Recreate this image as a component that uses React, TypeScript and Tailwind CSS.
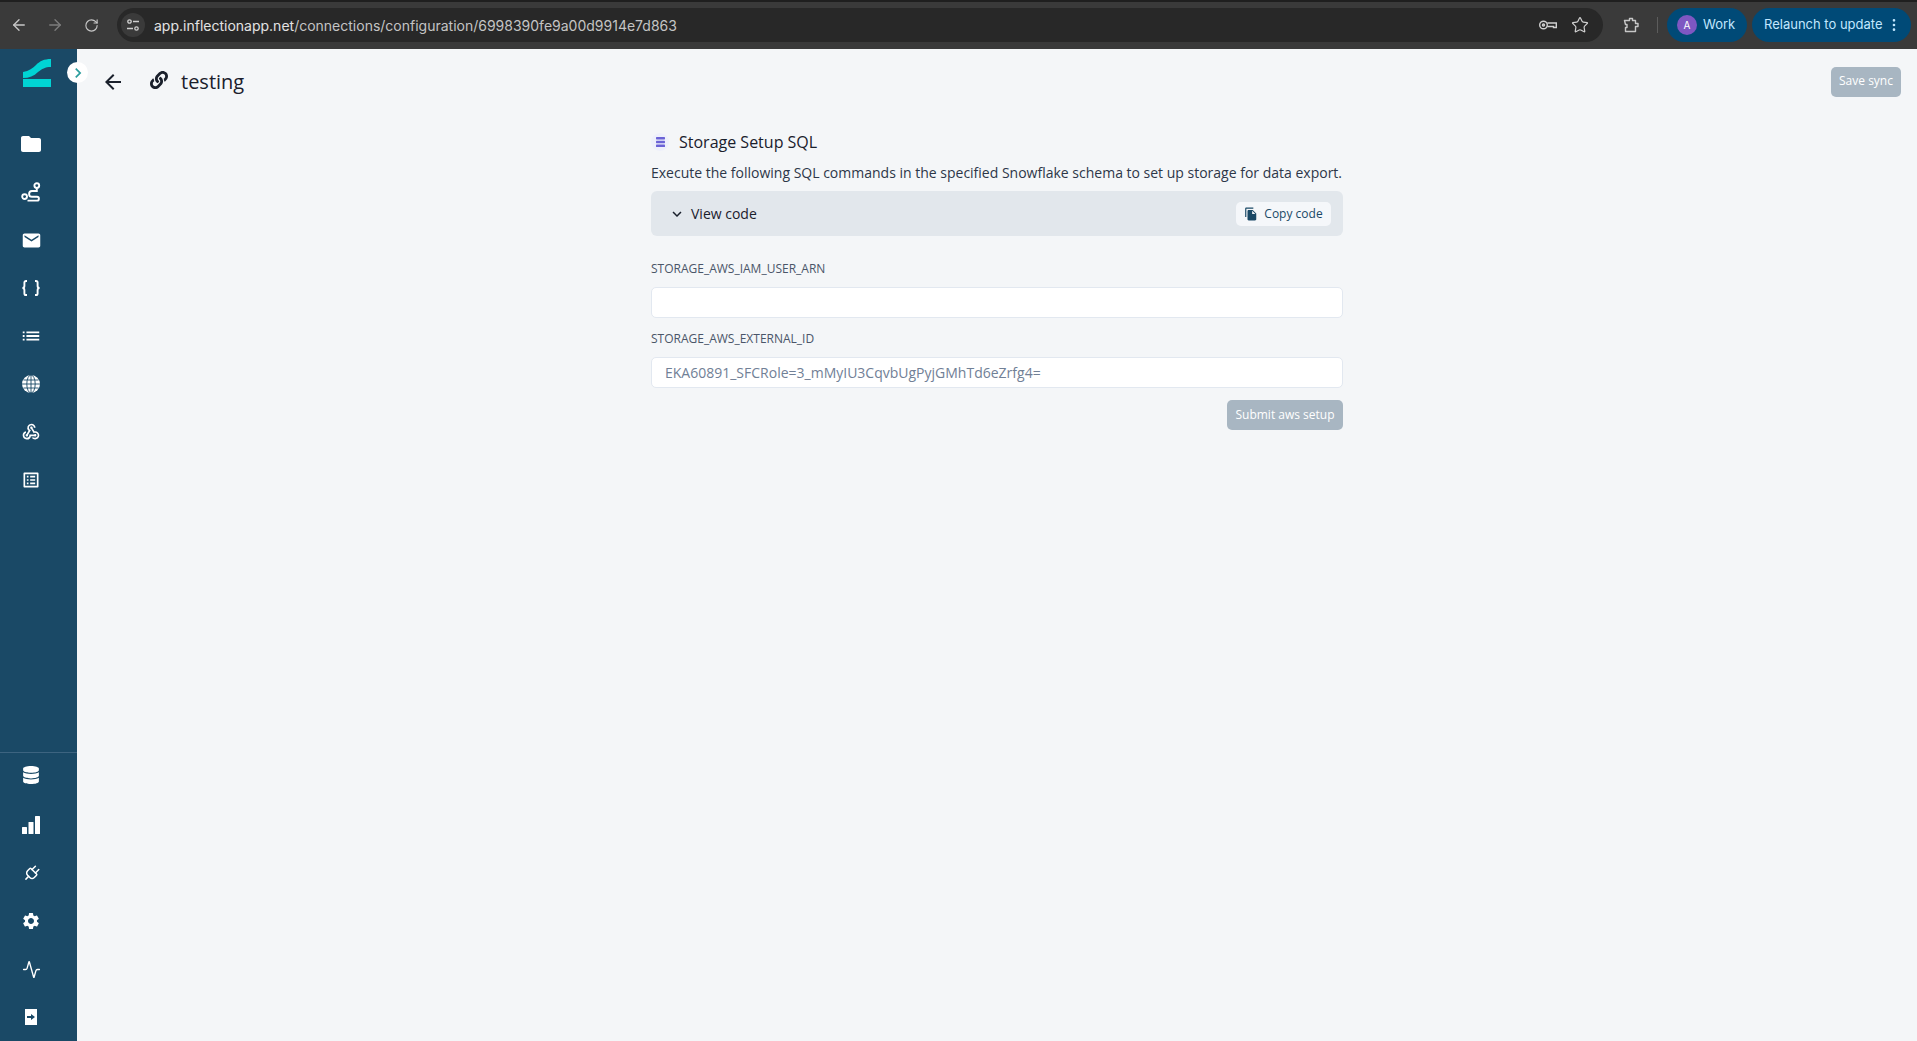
import React from "react";
import { MdFolder, MdEmail, MdWebhook, MdOutlineListAlt, MdArrowBack, MdKeyboardArrowDown, MdChevronRight, MdFileCopy, MdSettings, MdList } from "react-icons/md";
import { FaDatabase, FaLink } from "react-icons/fa";
import { Activity, Plug, ArrowLeft, ArrowRight, RotateCw, Star, MoreVertical } from "lucide-react";

const font = "font-['Open_Sans','Noto_Sans',sans-serif]";

function SideIcon({ children }: { children: React.ReactNode }) {
  return <div className="flex h-12 items-center justify-center text-white">{children}</div>;
}

function Logo() {
  return (
    <svg width="28" height="28" viewBox="0 0 28 28" className="block">
      <path d="M0 13 C6 12 10 9 13 6 C17 2 21 0 28 0 V8 C22 8 19 10 15 13 C11 17 6 19 0 19Z" fill="#00d4d4" />
      <rect x="0" y="20" width="28" height="8" fill="#00d4d4" />
    </svg>
  );
}

function ExitIcon() {
  return (
    <svg width="12" height="16" viewBox="0 0 12 16">
      <rect width="12" height="16" fill="#fff" />
      <path d="M2 7h4V5l4 3-4 3V9H2z" fill="#1a4966" />
    </svg>
  );
}

function RouteIcon() {
  return (
    <svg width="20" height="20" viewBox="0 0 20 20" fill="none" stroke="#fff" strokeWidth="1.9">
      <circle cx="15.8" cy="3.6" r="2.4" />
      <circle cx="3.6" cy="14.6" r="2.4" />
      <path d="M15.8 6.5 V9 H11 a2.9 2.9 0 0 0 0 5.8 H16 a1.9 1.9 0 0 1 0 3.8 H6.5" />
    </svg>
  );
}

function BracesIcon() {
  return (
    <svg width="20" height="16" viewBox="0 0 20 16" fill="none" stroke="#fff" strokeWidth="1.9">
      <path d="M6 1 H5 a1.6 1.6 0 0 0 -1.6 1.6 V6 a2 2 0 0 1 -2 2 a2 2 0 0 1 2 2 V13.4 a1.6 1.6 0 0 0 1.6 1.6 H6" />
      <path d="M14 1 H15 a1.6 1.6 0 0 1 1.6 1.6 V6 a2 2 0 0 0 2 2 a2 2 0 0 0 -2 2 V13.4 a1.6 1.6 0 0 1 -1.6 1.6 H14" />
    </svg>
  );
}

function GlobeIcon() {
  return (
    <svg width="18" height="18" viewBox="0 0 18 18" fill="none">
      <circle cx="9" cy="9" r="9" fill="#fff" />
      <g stroke="#1a4966" strokeWidth="0.9">
        <path d="M9 0V18M0 9H18M1.5 5H16.5M1.5 13H16.5" />
        <ellipse cx="9" cy="9" rx="4.2" ry="9" />
      </g>
    </svg>
  );
}

function BarsIcon() {
  return (
    <svg width="18" height="18" viewBox="0 0 18 18" fill="#fff">
      <rect x="0" y="11" width="5" height="7" rx="0.5" />
      <rect x="6.5" y="6" width="5" height="12" rx="0.5" />
      <rect x="13" y="0" width="5" height="18" rx="0.5" />
    </svg>
  );
}

function KeyIcon() {
  return (
    <svg width="18" height="12" viewBox="0 0 18 12" fill="none" stroke="currentColor" strokeWidth="1.4">
      <circle cx="4.5" cy="6" r="3.8" />
      <circle cx="4.5" cy="6" r="1" />
      <path d="M8.3 4 H17.3 V8.5 H14.5 V7.5 H8.3" />
    </svg>
  );
}

function ExtensionIcon() {
  return (
    <svg width="16" height="16" viewBox="0 0 16 16" fill="none" stroke="currentColor" strokeWidth="1.4" strokeLinejoin="round">
      <path d="M1.5 3.5 H6.5 V1.5 H9.5 V3.5 H12.5 V6.5 H15 V9.5 H12.5 V14.5 H2.5 V10.5 H4 V7.5 H2.5 Z" />
    </svg>
  );
}

export default function App() {
  return (
    <div className={"flex h-[1041px] w-[1917px] flex-col overflow-hidden bg-[#f4f6f8] " + font}>
      <div className="flex h-[49px] shrink-0 flex-col bg-[#3a3a3a]">
        <div className="h-[2px] bg-[#1f1f1f]" />
        <div className="flex flex-1 items-center pl-[10px] pb-[1px] text-[#c7c7c7]">
          <ArrowLeft size={18} strokeWidth={1.8} />
          <ArrowRight size={18} strokeWidth={1.8} className="ml-[18px] text-[#7d7d7d]" />
          <RotateCw size={15} strokeWidth={1.8} className="ml-[20px]" />
          <div className="ml-[18px] flex h-[34px] w-[1486px] shrink-0 items-center rounded-full bg-[#282828] pl-[4px] pr-[14px]">
            <div className="flex h-[24px] w-[24px] items-center justify-center rounded-full bg-[#3a3a3a]">
              <svg width="14" height="14" viewBox="0 0 14 14" fill="none" stroke="#d0d0d0" strokeWidth="1.3">
                <circle cx="3.5" cy="3.5" r="1.7" />
                <path d="M7 3.5h6M1 10.5h6" />
                <circle cx="10.5" cy="10.5" r="1.7" />
              </svg>
            </div>
            <span className="ml-[9px] font-['Inter',sans-serif] text-[14px] text-[#e3e3e3]">
              app.inflectionapp.net<span className="text-[#c4c4c4]">/connections/configuration/6998390fe9a00d9914e7d863</span>
            </span>
            <div className="ml-auto flex items-center gap-[14px] text-[#d0d0d0]">
              <KeyIcon />
              <Star size={18} strokeWidth={1.6} />
            </div>
          </div>
          <div className="ml-[20px]"><ExtensionIcon /></div>
          <div className="ml-[18px] h-[16px] w-px bg-[#5c5c5c]" />
          <div className="ml-[9px] flex h-[34px] w-[80px] shrink-0 items-center rounded-full bg-[#004a77] pl-[10px] text-[#c2e7ff]">
            <div className="flex h-[20px] w-[20px] items-center justify-center rounded-full bg-[#7e57c2] font-['Inter',sans-serif] text-[10px] text-white">A</div>
            <span className="ml-[6px] font-['Inter',sans-serif] text-[13px]">Work</span>
          </div>
          <div className="ml-[5px] flex h-[34px] w-[159px] shrink-0 items-center rounded-full bg-[#004a77] pl-[12px] text-[#c2e7ff]">
            <span className="font-['Inter',sans-serif] text-[13px] whitespace-nowrap">Relaunch to update</span>
            <MoreVertical size={16} className="ml-[3px]" />
          </div>
        </div>
      </div>

      <div className="flex min-h-0 flex-1">
        <aside className="relative flex w-[77px] shrink-0 flex-col bg-[#1a4966]">
          <div className="h-[71px] pl-[23px] pt-[10px]">
            <Logo />
          </div>
          <nav className="flex flex-col pr-[15px]">
            <SideIcon><MdFolder size={24} /></SideIcon>
            <SideIcon><RouteIcon /></SideIcon>
            <SideIcon><MdEmail size={21} /></SideIcon>
            <SideIcon><BracesIcon /></SideIcon>
            <SideIcon><MdList size={22} /></SideIcon>
            <SideIcon><GlobeIcon /></SideIcon>
            <SideIcon><MdWebhook size={20} /></SideIcon>
            <SideIcon><MdOutlineListAlt size={20} /></SideIcon>
          </nav>
          <div className="mt-auto border-t border-[#3d6480]">
            <div className="-mt-[2px] flex flex-col pr-[15px]">
              <div className="pb-[2px]">
                <SideIcon><FaDatabase size={18} /></SideIcon>
              </div>
              <SideIcon><BarsIcon /></SideIcon>
              <SideIcon><Plug size={19} strokeWidth={1.9} className="rotate-45" /></SideIcon>
              <SideIcon><MdSettings size={20} /></SideIcon>
              <SideIcon><Activity size={19} strokeWidth={1.7} /></SideIcon>
              <SideIcon><ExitIcon /></SideIcon>
            </div>
          </div>
          <div className="absolute left-[67px] top-[13px] flex h-[21px] w-[21px] items-center justify-center rounded-full bg-white text-[#2a9d9d]">
            <MdChevronRight size={20} />
          </div>
        </aside>

        <main className="flex min-w-0 flex-1 flex-col">
          <header className="flex items-start justify-between pl-[24px] pr-[16px] pt-[18px]">
            <div className="flex h-[30px] items-center text-[#1a202c]">
              <MdArrowBack size={24} />
              <FaLink size={18} className="ml-[25px] -mt-[4px]" />
              <span className="ml-[13px] text-[20px] font-medium leading-none">testing</span>
            </div>
            <button className="h-[30px] w-[70px] rounded-[5px] bg-[#a8b6c2] pb-[2px] text-[12px] font-medium text-white">Save sync</button>
          </header>

          <section className="ml-[574px] flex w-[692px] flex-col pt-[36px]">
            <div className="flex h-[18px] items-center">
              <div className="flex h-[18px] w-[18px] items-center justify-center rounded-full bg-[#eef0fb]">
                <svg width="9" height="10" viewBox="0 0 9 10" fill="#6b63d6">
                  <rect y="0" width="9" height="2.4" rx="0.6" />
                  <rect y="3.8" width="9" height="2.4" rx="0.6" />
                  <rect y="7.6" width="9" height="2.4" rx="0.6" />
                </svg>
              </div>
              <h2 className="ml-[10px] text-[16px] font-medium text-[#1a202c]">Storage Setup SQL</h2>
            </div>
            <p className="mt-[12px] whitespace-nowrap text-[14px] leading-[20px] text-[#2d3748]">
              Execute the following SQL commands in the specified Snowflake schema to set up storage for data export.
            </p>
            <div className="mt-[8px] flex h-[45px] items-center justify-between rounded-[6px] bg-[#e2e7ec] pl-[17px] pr-[12px]">
              <div className="flex items-center text-[#1a202c]">
                <MdKeyboardArrowDown size={18} />
                <span className="ml-[5px] text-[14px] font-medium">View code</span>
              </div>
              <button className="flex h-[24px] w-[95px] items-center justify-center rounded-[5px] bg-[#f5f7fa] text-[12px] font-medium text-[#1a4966]">
                <MdFileCopy size={14} />
                <span className="ml-[6px]">Copy code</span>
              </button>
            </div>
            <label className="mt-[24px] text-[12px] leading-[18px] text-[#4a5568]">STORAGE_AWS_IAM_USER_ARN</label>
            <div className="mt-[9px] h-[31px] rounded-[5px] border border-[#e2e8f0] bg-white" />
            <label className="mt-[12px] text-[12px] leading-[18px] text-[#4a5568]">STORAGE_AWS_EXTERNAL_ID</label>
            <div className="mt-[9px] flex h-[31px] items-center rounded-[5px] border border-[#e2e8f0] bg-white pl-[13px] text-[14px] text-[#718096]">
              EKA60891_SFCRole=3_mMyIU3CqvbUgPyjGMhTd6eZrfg4=
            </div>
            <div className="mt-[12px] flex justify-end">
              <button className="h-[30px] w-[116px] rounded-[5px] bg-[#a8b6c2] text-[12px] font-medium text-white">Submit aws setup</button>
            </div>
          </section>
        </main>
      </div>
    </div>
  );
}
